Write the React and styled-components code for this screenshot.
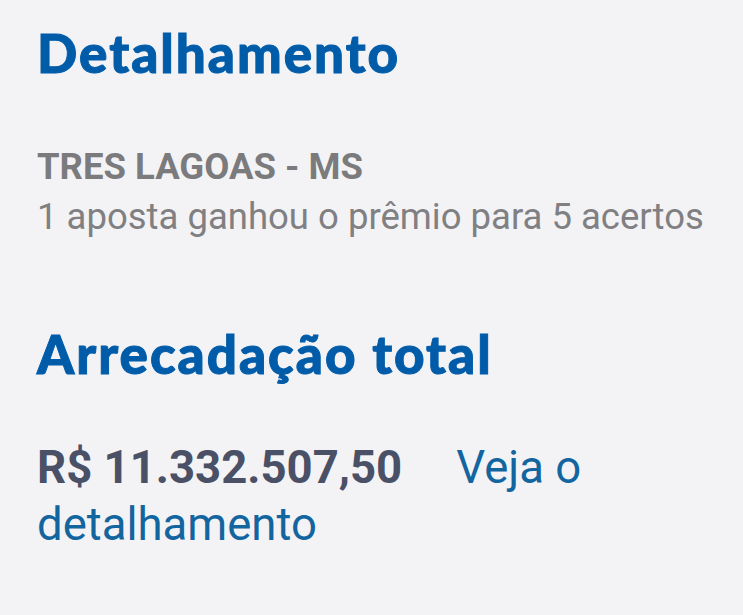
import React from 'react';
import styled, { createGlobalStyle } from 'styled-components';

const GlobalStyle = createGlobalStyle`
  html, body {
    margin: 0;
    padding: 0;
    background: #f3f3f6;
  }
  body {
    font-family: Roboto, "Liberation Sans", sans-serif;
  }
`;

const Page = styled.div`
  width: 743px;
  height: 615px;
  box-sizing: border-box;
  padding: 20px 37px 0;
  background: #f3f3f6;
  overflow: hidden;
`;

const Heading = styled.h2`
  margin: 0;
  font-family: Lato, "Open Sans", sans-serif;
  font-weight: 900;
  font-size: 53px;
  line-height: 66px;
  color: #005ca9;
  letter-spacing: 2px;
  -webkit-text-stroke: 1px #005ca9;
`;

const Section = styled.section`
  margin-top: ${(p) => p.$top}px;
`;

const Place = styled.div`
  font-size: 36.5px;
  font-weight: 700;
  line-height: 50px;
  color: #7b7b7d;
`;

const Info = styled.div`
  font-size: 36.5px;
  font-weight: 400;
  line-height: 50px;
  color: #808083;
`;

const Amount = styled.p`
  margin: 0;
  font-size: 45.5px;
  line-height: 57px;
`;

const Value = styled.span`
  font-weight: 700;
  color: #4a5066;
  margin-right: 54px;
`;

const Link = styled.a`
  color: #13659f;
  text-decoration: none;
  font-weight: 400;
`;

export default function App() {
  return (
    <Page>
      <GlobalStyle />
      <Heading>Detalhamento</Heading>
      <Section $top={56}>
        <Place>TRES LAGOAS - MS</Place>
        <Info>1 aposta ganhou o prêmio para 5 acertos</Info>
      </Section>
      <Section $top={79}>
        <Heading>Arrecadação total</Heading>
      </Section>
      <Section $top={52}>
        <Amount>
          <Value>R$ 11.332.507,50</Value>
          <Link href="#">Veja o detalhamento</Link>
        </Amount>
      </Section>
    </Page>
  );
}
